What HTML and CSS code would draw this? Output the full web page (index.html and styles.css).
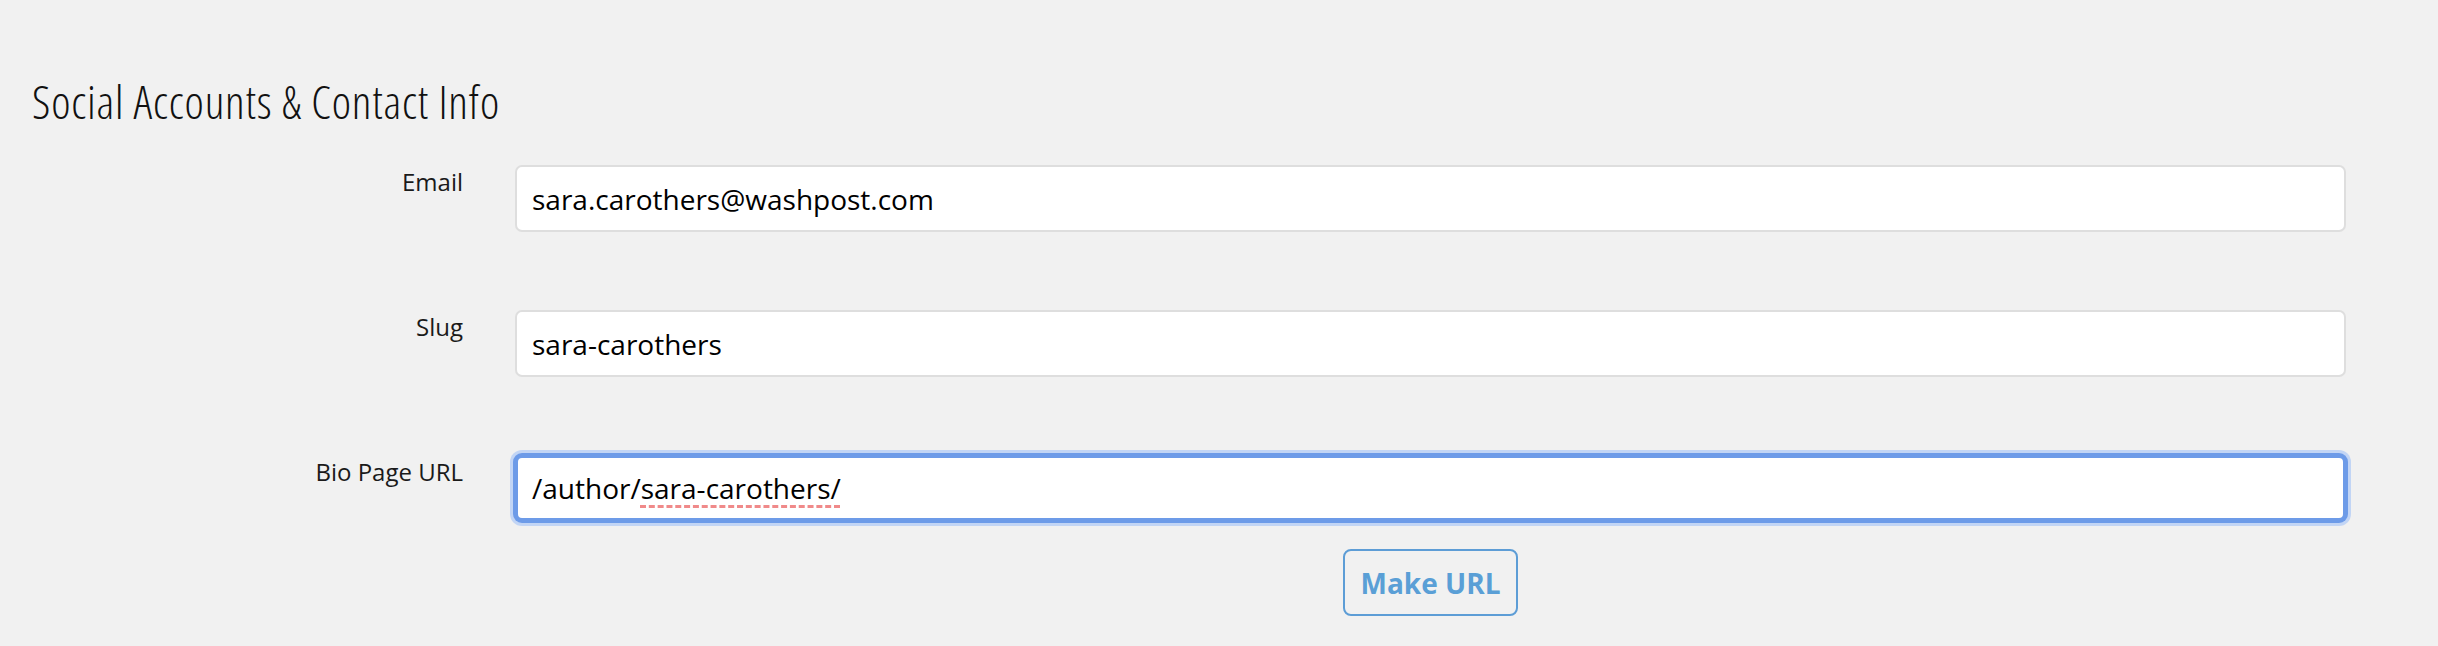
FILE: index.html
```html
<!DOCTYPE html>
<html>
  <head>
    <title>Social Accounts &amp; Contact Info</title>
    <meta name="viewport" content="width=device-width, initial-scale=1.0" />
    <link rel="stylesheet" href="styles.css">
  </head>
  <body>
    <h2 class="section-title">Social Accounts &amp; Contact Info</h2>
    <form class="contact-form">
      <label class="field-label" for="email">Email</label>
      <input id="email" class="field-input" type="text" value="sara.carothers@washpost.com" />

      <label class="field-label" for="slug">Slug</label>
      <input id="slug" class="field-input" type="text" value="sara-carothers" />

      <label class="field-label" for="bio-url">Bio Page URL</label>
      <div id="bio-url" class="field-input field-focused" role="textbox">/author/<span class="misspelled">sara-carothers/</span></div>

      <button type="button" class="make-url">Make URL</button>
    </form>
  </body>
</html>
```

FILE: styles.css
```css
body {
  margin: 0;
  background: #f1f1f1;
  font-family: "Open Sans", "Liberation Sans", sans-serif;
  color: #111;
}
.section-title {
  margin: 0;
  padding: 74px 0 0 32px;
  font-size: 46px;
  font-weight: 300;
  font-stretch: 80%;
  letter-spacing: 0.8px;
  line-height: 1.2;
  height: 89px;
  box-sizing: border-box;
}
.contact-form {
  display: grid;
  grid-template-columns: 463px 1fr;
  column-gap: 52px;
  row-gap: 78px;
  padding: 76px 92px 0 0;
}
.field-label {
  justify-self: end;
  font-size: 24px;
  color: #1a1a1a;
}
.field-input {
  box-sizing: border-box;
  height: 67px;
  padding: 0 15px;
  border: 2px solid #dedede;
  border-radius: 7px;
  background: #fff;
  font-family: "Open Sans", "Liberation Sans", sans-serif;
  font-size: 28px;
  color: #000;
  outline: none;
}
.field-focused {
  display: flex;
  align-items: center;
  height: 66px;
  border-color: #6d9be8;
  border-width: 3px;
  padding: 0 14px;
  box-shadow: 0 0 0 2px #6d9be8, 0 0 0 5px #c2d5f5;
  white-space: pre;
}
.misspelled {
  text-decoration: underline dashed #f08a8a;
  text-decoration-thickness: 3px;
  text-underline-offset: 6px;
}
.make-url {
  grid-column: 2;
  justify-self: center;
  margin-top: -50px;
  width: 175px;
  height: 67px;
  border: 2px solid #5d9dd6;
  border-radius: 8px;
  background: transparent;
  font-family: "Open Sans", "Liberation Sans", sans-serif;
  font-size: 28px;
  font-weight: 700;
  color: #5a9fd6;
}
```
